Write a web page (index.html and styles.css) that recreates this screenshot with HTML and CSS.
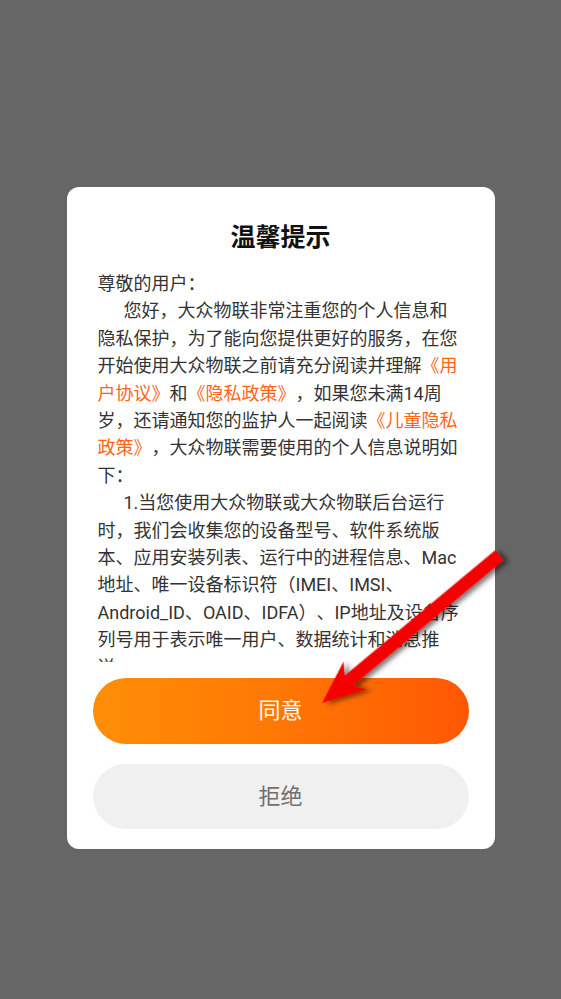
FILE: index.html
```html
<!DOCTYPE html>
<html lang="zh-CN">
<head>
<meta charset="utf-8">
<title>温馨提示</title>
<link rel="stylesheet" href="styles.css">
</head>
<body>
<div class="screen">
  <div class="dialog">
    <h1 class="title">温馨提示</h1>
    <div class="content">
      <p class="line">尊敬的用户：</p>
      <p class="para">您好，大众物联非常注重您的个人信息和隐私保护，为了能向您提供更好的服务，在您开始使用大众物联之前请充分阅读并理解<span class="link">《用户协议》</span>和<span class="link">《隐私政策》</span>，如果您未满14周岁，还请通知您的监护人一起阅读<span class="link">《儿童隐私政策》</span>，大众物联需要使用的个人信息说明如下：</p>
      <p class="para">1.当您使用大众物联或大众物联后台运行时，我们会收集您的设备型号、软件系统版本、应用安装列表、运行中的进程信息、Mac地址、唯一设备标识符（IMEI、IMSI、Android_ID、OAID、IDFA）、IP地址及设备序列号用于表示唯一用户、数据统计和消息推送。</p>
      <p class="para">2.为了向您提供更好的服务，我们会在您授权后获取您的位置信息。</p>
    </div>
    <button class="btn btn-agree">同意</button>
    <button class="btn btn-reject">拒绝</button>
  </div>
  <svg class="arrow" width="561" height="999" viewBox="0 0 561 999" xmlns="http://www.w3.org/2000/svg">
    <defs>
      <filter id="sh" x="-20%" y="-20%" width="140%" height="140%">
        <feDropShadow dx="3" dy="4" stdDeviation="2.5" flood-color="#000" flood-opacity="0.55"/>
      </filter>
    </defs>
    <g transform="translate(322 703) rotate(-39.8)" filter="url(#sh)">
      <polygon points="0,0 43,-18 35,-6.6 231,-6.6 231,6.6 35,6.6 43,18" fill="#f50000"/>
    </g>
  </svg>
</div>
</body>
</html>
```

FILE: styles.css
```css
html, body {
  margin: 0;
  padding: 0;
}

body {
  background: #666666;
  font-family: Roboto, "Noto Sans CJK SC", "Noto Sans", sans-serif;
}

.screen {
  position: relative;
  width: 561px;
  height: 999px;
  padding-top: 187px;
  box-sizing: border-box;
  overflow: hidden;
}

.dialog {
  width: 428px;
  margin: 0 auto;
  background: #ffffff;
  border-radius: 12px;
  padding: 35px 26px 20px;
  box-sizing: border-box;
  display: flex;
  flex-direction: column;
}

.title {
  margin: 0 0 16px;
  font-size: 25px;
  line-height: 32px;
  font-weight: 700;
  color: #111111;
  text-align: center;
}

.content {
  margin: 0 6px 0 5px;
  height: 392px;
  overflow: hidden;
  font-size: 18px;
  line-height: 27.4px;
  color: #333333;
  text-spacing-trim: space-all;
}

.content p {
  margin: 0;
}

.para {
  text-indent: 26px;
}

.link {
  color: #ff6414;
}

.btn {
  display: block;
  width: 100%;
  border: none;
  border-radius: 33px;
  font-family: Roboto, "Noto Sans CJK SC", sans-serif;
  font-size: 22px;
  line-height: 1;
  padding: 0;
}

.btn-agree {
  margin-top: 16px;
  height: 66px;
  color: #ffffff;
  background: linear-gradient(90deg, #ff8e06 0%, #ff7a05 45%, #ff5703 100%);
}

.btn-reject {
  margin-top: 20px;
  height: 65px;
  color: #707070;
  background: #f0f0f0;
}

.arrow {
  position: absolute;
  left: 0;
  top: 0;
  pointer-events: none;
}
```
